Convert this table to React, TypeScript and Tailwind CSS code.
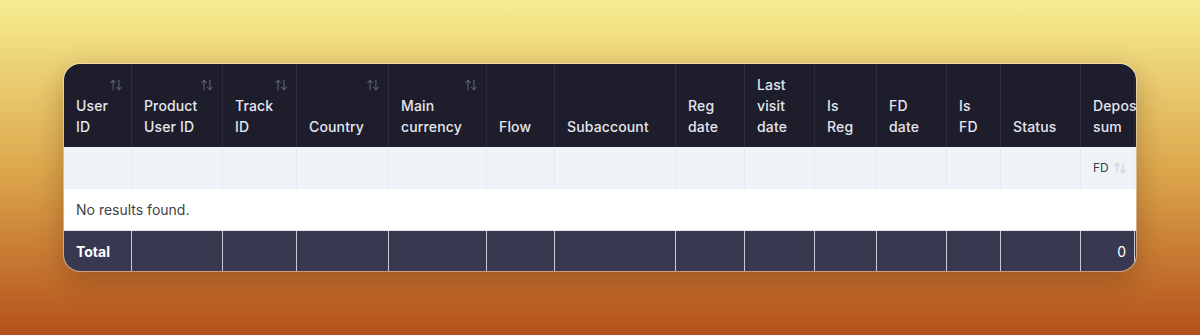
import { ArrowUpDown } from 'lucide-react';

interface Column {
  lines: string[];
  sortable?: boolean;
}

const columns: Column[] = [
  { lines: ['User', 'ID'], sortable: true },
  { lines: ['Product', 'User ID'], sortable: true },
  { lines: ['Track', 'ID'], sortable: true },
  { lines: ['Country'], sortable: true },
  { lines: ['Main', 'currency'], sortable: true },
  { lines: ['Flow'] },
  { lines: ['Subaccount'] },
  { lines: ['Reg', 'date'] },
  { lines: ['Last', 'visit', 'date'] },
  { lines: ['Is', 'Reg'] },
  { lines: ['FD', 'date'] },
  { lines: ['Is', 'FD'] },
  { lines: ['Status'] },
  { lines: ['Deposit', 'sum'] },
  { lines: ['Deposit', 'count'] },
];

const gridCols =
  'grid grid-cols-[68px_91px_74px_92px_98px_68px_121px_69px_70px_62px_70px_54px_80px_54px_90px]';

function HeaderCell({ col }: { col: Column }) {
  return (
    <div
      className={`flex flex-col border-r border-[#2c2c3e] py-2.5 pl-3 pr-2 ${
        col.sortable ? 'justify-between' : 'justify-end'
      }`}
    >
      {col.sortable && (
        <div className="flex h-[21px] items-center justify-end">
          <ArrowUpDown className="h-3.5 w-3.5 text-[#5a5d6e]" strokeWidth={2} />
        </div>
      )}
      <div className="whitespace-nowrap text-[14px] font-medium leading-[21px] tracking-[0.01em] text-[#e6e6ee]">
        {col.lines.map((line) => (
          <div key={line}>{line}</div>
        ))}
      </div>
    </div>
  );
}

export default function App() {
  return (
    <div
      className="h-[335px] w-[1200px] overflow-hidden bg-gradient-to-b from-[#f6ee91] via-[#dca84c] to-[#b3501a] px-16 pt-16"
      style={{ fontFamily: 'Inter, "Open Sans", sans-serif' }}
    >
      <div className="overflow-hidden rounded-2xl bg-white shadow-[0_8px_28px_rgba(60,20,0,0.3)] ring-1 ring-white/40">
        <div className="w-max">
          <div className={`${gridCols} h-[83px] bg-[#1d1d2c]`}>
            {columns.map((col, i) => (
              <HeaderCell key={i} col={col} />
            ))}
          </div>

          <div className={`${gridCols} h-[42px] bg-[#eff3f7]`}>
            {columns.map((col, i) => (
              <div key={i} className="flex items-center border-r border-[#e4e9ef] pl-3">
                {i === 13 && (
                  <div className="flex items-center gap-1 text-[12px] text-[#3b3f4a]">
                    FD
                    <ArrowUpDown className="h-3.5 w-3.5 text-[#cdd3dc]" strokeWidth={2} />
                  </div>
                )}
              </div>
            ))}
          </div>

          <div className="flex h-[41px] items-center bg-white pl-3 text-[14px] text-[#3f3f4a]">
            No results found.
          </div>

          <div className={`${gridCols} h-[41px] border-t border-[#e2e4ea] bg-[#383851]`}>
            {columns.map((col, i) => (
              <div
                key={i}
                className="flex items-center border-r border-[#c9cad4] px-3 text-[14px] text-white"
              >
                {i === 0 && <span className="font-bold">Total</span>}
                {i === 13 && <span className="ml-auto -mr-1">0</span>}
              </div>
            ))}
          </div>
        </div>
      </div>
    </div>
  );
}
